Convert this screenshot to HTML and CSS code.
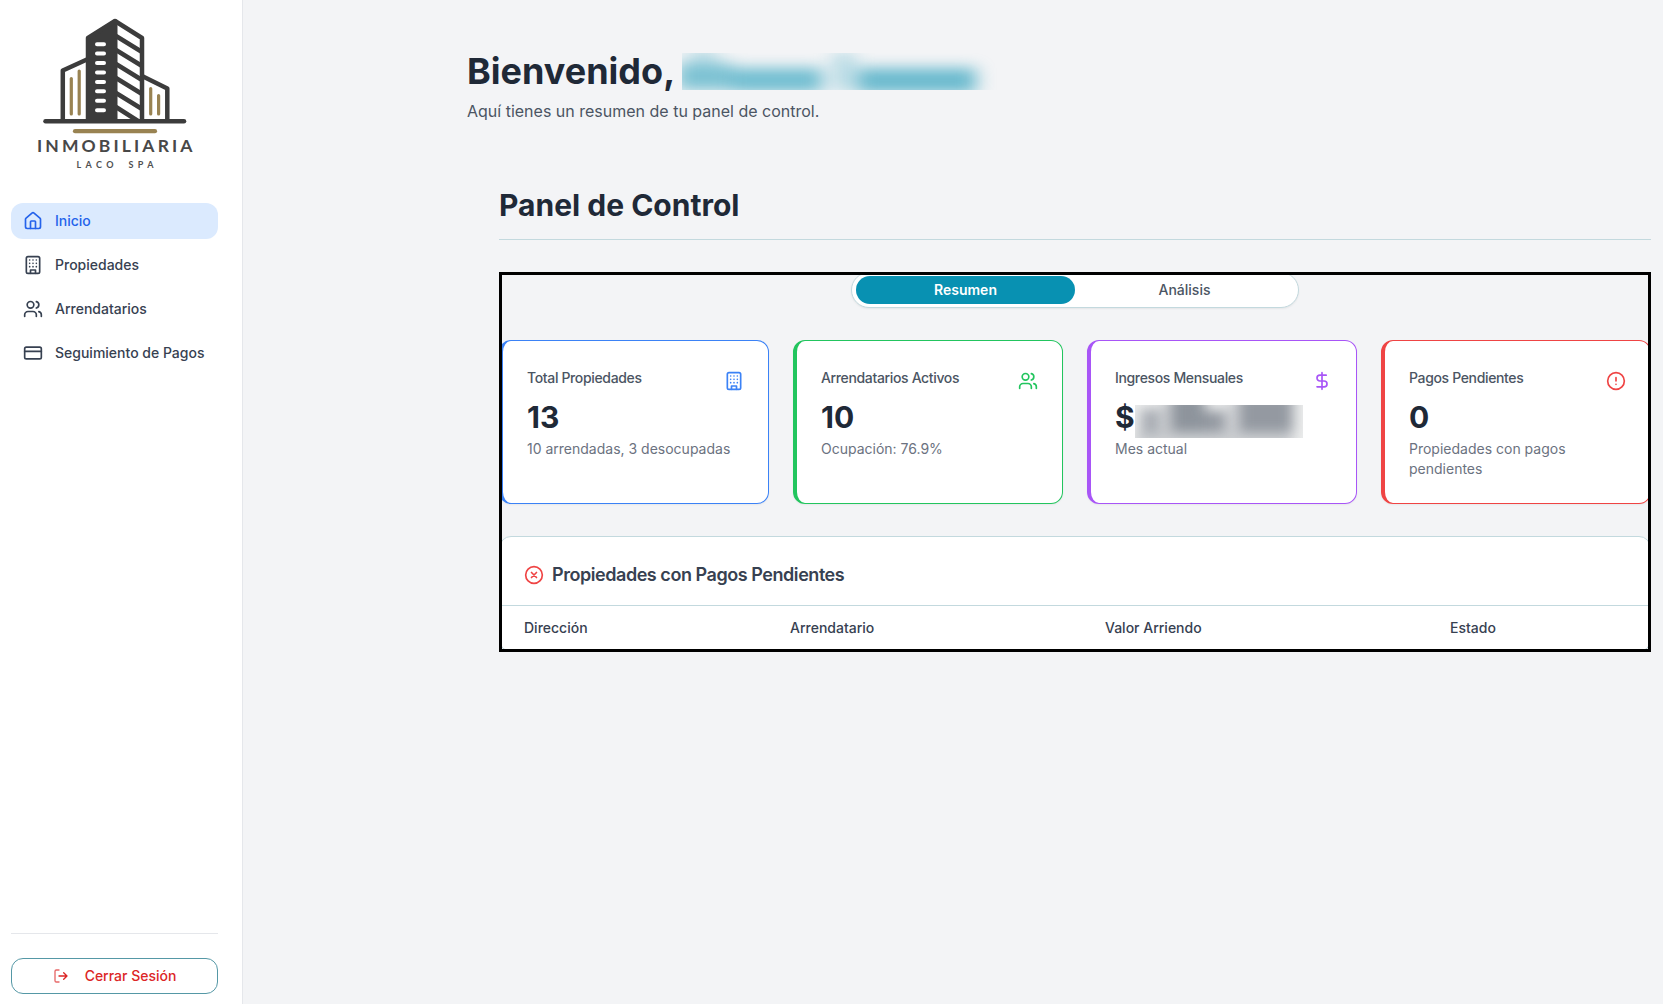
FILE: index.html
```html
<!DOCTYPE html>
<html lang="es">
<head>
<meta charset="utf-8">
<title>Inmobiliaria Laco SpA</title>
<link rel="stylesheet" href="styles.css">
</head>
<body>
<svg class="defs" width="0" height="0" aria-hidden="true">
  <symbol id="i-home" viewBox="0 0 24 24"><path d="M15 21v-8a1 1 0 0 0-1-1h-4a1 1 0 0 0-1 1v8"/><path d="M3 10a2 2 0 0 1 .709-1.528l7-5.999a2 2 0 0 1 2.582 0l7 5.999A2 2 0 0 1 21 10v9a2 2 0 0 1-2 2H5a2 2 0 0 1-2-2z"/></symbol>
  <symbol id="i-building" viewBox="0 0 24 24"><rect x="4" y="2" width="16" height="20" rx="2"/><path d="M9 22v-4h6v4M8 6h.01M16 6h.01M12 6h.01M12 10h.01M12 14h.01M16 10h.01M16 14h.01M8 10h.01M8 14h.01"/></symbol>
  <symbol id="i-users" viewBox="0 0 24 24"><path d="M16 21v-2a4 4 0 0 0-4-4H6a4 4 0 0 0-4 4v2"/><circle cx="9" cy="7" r="4"/><path d="M22 21v-2a4 4 0 0 0-3-3.87M16 3.13a4 4 0 0 1 0 7.75"/></symbol>
  <symbol id="i-card" viewBox="0 0 24 24"><rect x="2" y="5" width="20" height="14" rx="2"/><path d="M2 10h20"/></symbol>
  <symbol id="i-logout" viewBox="0 0 24 24"><path opacity=".7" d="M9 21H5a2 2 0 0 1-2-2V5a2 2 0 0 1 2-2h4"/><path d="m16 17 5-5-5-5M21 12H9"/></symbol>
  <symbol id="i-dollar" viewBox="0 0 24 24"><path d="M12 2v20M17 5H9.5a3.5 3.5 0 0 0 0 7h5a3.5 3.5 0 0 1 0 7H6"/></symbol>
  <symbol id="i-alert" viewBox="0 0 24 24"><circle cx="12" cy="12" r="10"/><path d="M12 8v4M12 16h.01"/></symbol>
  <symbol id="i-x" viewBox="0 0 24 24"><circle cx="12" cy="12" r="10"/><path d="m15 9-6 6M9 9l6 6"/></symbol>
</svg>
<div class="app">
  <aside class="sidebar">
    <svg class="logo" viewBox="35 10 165 165" role="img" aria-label="Inmobiliaria Laco SpA">
      <path d="M86 37.500 115 19l2.500 1V121H86z" fill="#3c3c3c"/>
      <g fill="none" stroke="#3c3c3c" stroke-width="4.500" stroke-linejoin="round">
        <path d="M88 121V38l27-17 27 17v83"/>
        <path d="M62.800 121V70.500L88 59M142 76l25.300 12.500V121"/>
        <path d="m116 36 26 16M116 50l26 16M116 64l26 16M116 78l26 16M116 93l26 16M116 107l22 14"/>
        <path d="M45.500 121.300h138.500" stroke-linecap="round"/>
      </g>
      <g fill="none" stroke="#fff" stroke-width="4" stroke-linecap="round">
        <path d="M97 44.200h7M97 53.600h7M97 63h7M97 72.500h7M97 82h7M97 91.300h7M97 100.800h7M97 110.300h7"/>
      </g>
      <g fill="none" stroke="#998352" stroke-linecap="round">
        <path d="M71.300 78.500v35.500M79.200 71v43M150.700 88.500V114M158.600 95.500V114" stroke-width="3.200"/>
        <path d="M75 131.200h80" stroke-width="4.200"/>
      </g>
      <text class="logo-name" x="37" y="152.300" textLength="155.500">INMOBILIARIA</text>
      <text class="logo-sub" x="76.500" y="168" textLength="37">LACO</text>
      <text class="logo-sub" x="128.500" y="168" textLength="25">SPA</text>
    </svg>
    <nav class="nav">
      <a class="nav-item active"><svg class="icon"><use href="#i-home"/></svg>Inicio</a>
      <a class="nav-item"><svg class="icon"><use href="#i-building"/></svg>Propiedades</a>
      <a class="nav-item"><svg class="icon"><use href="#i-users"/></svg>Arrendatarios</a>
      <a class="nav-item"><svg class="icon"><use href="#i-card"/></svg>Seguimiento de Pagos</a>
    </nav>
    <div class="sidebar-foot">
      <button class="logout"><svg class="icon"><use href="#i-logout"/></svg>Cerrar Sesión</button>
    </div>
  </aside>
  <main class="main">
    <header class="welcome">
      <h1>Bienvenido,
        <svg class="hidden-name" viewBox="0 0 330 37" aria-hidden="true">
          <defs><filter id="soft" filterUnits="userSpaceOnUse" x="-60" y="-60" width="450" height="160" color-interpolation-filters="sRGB"><feGaussianBlur stdDeviation="9 7"/></filter></defs>
          <g filter="url(#soft)" fill="#0891b2">
            <rect x="-4" y="10" width="54" height="27" opacity=".5"/>
            <rect x="8" y="-6" width="26" height="16" opacity=".2"/>
            <rect x="50" y="15" width="90" height="24" opacity=".55"/>
            <rect x="150" y="0" width="24" height="38" opacity=".24"/>
            <rect x="176" y="15" width="118" height="25" opacity=".58"/>
          </g>
        </svg>
      </h1>
      <p>Aquí tienes un resumen de tu panel de control.</p>
    </header>
    <section class="panel">
      <h2>Panel de Control</h2>
      <div class="framed">
        <div class="tabs">
          <button class="tab selected">Resumen</button>
          <button class="tab">Análisis</button>
        </div>
        <div class="cards">
          <article class="card blue">
            <div class="card-head"><h3>Total Propiedades</h3><svg class="icon"><use href="#i-building"/></svg></div>
            <div class="value">13</div>
            <p>10 arrendadas, 3 desocupadas</p>
          </article>
          <article class="card green">
            <div class="card-head"><h3>Arrendatarios Activos</h3><svg class="icon"><use href="#i-users"/></svg></div>
            <div class="value">10</div>
            <p>Ocupación: 76.9%</p>
          </article>
          <article class="card purple">
            <div class="card-head"><h3>Ingresos Mensuales</h3><svg class="icon"><use href="#i-dollar"/></svg></div>
            <div class="value">$<svg class="hidden-amount" viewBox="0 0 168 33" aria-hidden="true">
              <defs><filter id="soft2" filterUnits="userSpaceOnUse" x="-40" y="-40" width="250" height="120" color-interpolation-filters="sRGB"><feGaussianBlur stdDeviation="6.500 6"/></filter></defs>
              <rect width="168" height="33" fill="#eceded"/>
              <g filter="url(#soft2)" fill="#5d6572">
                <rect x="6" y="4" width="18" height="24" opacity=".48"/>
                <rect x="24" y="-4" width="12" height="32" opacity=".2"/>
                <rect x="36" y="-10" width="34" height="37" opacity=".66"/>
                <rect x="70" y="6" width="20" height="21" opacity=".62"/>
                <rect x="90" y="-4" width="14" height="32" opacity=".18"/>
                <rect x="104" y="-10" width="54" height="37" opacity=".62"/>
                <rect x="0" y="27" width="158" height="14" opacity=".24"/>
              </g>
            </svg></div>
            <p>Mes actual</p>
          </article>
          <article class="card red">
            <div class="card-head"><h3>Pagos Pendientes</h3><svg class="icon"><use href="#i-alert"/></svg></div>
            <div class="value">0</div>
            <p>Propiedades con pagos pendientes</p>
          </article>
        </div>
        <section class="pending">
          <h3><svg class="icon"><use href="#i-x"/></svg>Propiedades con Pagos Pendientes</h3>
          <div class="thead"><span>Dirección</span><span>Arrendatario</span><span>Valor Arriendo</span><span>Estado</span></div>
        </section>
      </div>
    </section>
  </main>
</div>
</body>
</html>
```
FILE: styles.css
```css
* { box-sizing: border-box; margin: 0; padding: 0; }
body {
  font-family: Inter, "Liberation Sans", sans-serif;
  font-size: 14px;
  line-height: 20px;
  color: #1f2937;
  background: #f3f4f6;
}
button { font: inherit; border: 0; background: none; }
.defs { display: block; }
.icon {
  width: 20px; height: 20px; flex: none;
  fill: none; stroke: currentColor; stroke-width: 2;
  stroke-linecap: round; stroke-linejoin: round;
}
.app { display: flex; height: 1004px; overflow: hidden; }

.sidebar {
  width: 243px; flex: none;
  display: flex; flex-direction: column;
  padding: 10px 24px 10px 11px;
  background: #fff;
  border-right: 1px solid #e5e7eb;
}
.logo { width: 165px; height: 165px; margin-left: 24px; }
.logo-name { font: 700 17.500px Lato, sans-serif; fill: #484848; }
.logo-sub { font: 700 9px Lato, sans-serif; fill: #505050; }
.nav { display: flex; flex-direction: column; gap: 8px; margin-top: 28px; }
.nav-item {
  display: flex; align-items: center; gap: 12px;
  height: 36px; padding: 0 12px;
  border-radius: 12px;
  font-weight: 500; color: #374151;
  white-space: nowrap;
}
.nav-item.active { background: #dbeafe; color: #2563eb; }
.sidebar-foot { margin-top: auto; border-top: 1px solid #e5e7eb; padding-top: 24px; }
.logout {
  display: flex; align-items: center; justify-content: center; gap: 16px;
  width: 100%; height: 36px;
  border: 1px solid #5598a6; border-radius: 12px;
  font-weight: 500; color: #dc2626;
}
.logout .icon { width: 16px; height: 16px; }

.main { flex: 1; padding: 51px 12px 0 224px; }
.welcome h1 {
  display: flex; align-items: flex-start; gap: 7px;
  font-size: 36px; line-height: 40px; font-weight: 700;
}
.hidden-name { width: 330px; height: 37px; margin-top: 2px; overflow: hidden; }
.welcome p { margin-top: 8px; font-size: 16px; line-height: 24px; color: #4b5563; }
.panel { margin: 64px 0 0 32px; }
.panel h2 {
  font-size: 30px; line-height: 36px; font-weight: 700;
  padding-bottom: 16px; margin-bottom: 32px;
  border-bottom: 1px solid #c3d9de;
}

.framed { position: relative; height: 380px; overflow: hidden; }
.framed::after { content: ""; position: absolute; inset: 0; border: 3px solid #000; }
.tabs {
  display: flex; align-items: center;
  width: 448px; height: 36px; margin: 0 auto 32px; padding: 0 4px;
  background: #fff;
  border: 1px solid #c3d9de; border-radius: 18px;
  box-shadow: 0 1px 2px rgba(0, 0, 0, .06);
}
.tab { flex: 1; height: 28px; border-radius: 14px; font-weight: 500; color: #4b5563; }
.tab.selected { background: #0891b2; color: #fff; font-weight: 600; }

.cards { display: grid; grid-template-columns: repeat(4, 1fr); gap: 24px; }
.card {
  height: 164px; padding: 24px;
  background: #fff;
  border: 1px solid var(--tone); border-left-width: 4px;
  border-radius: 12px;
  box-shadow: 0 1px 2px rgba(0, 0, 0, .05);
}
.blue { --tone: #3b82f6; }
.green { --tone: #22c55e; }
.purple { --tone: #a855f7; }
.red { --tone: #ef4444; }
.card-head { display: flex; justify-content: space-between; height: 34px; padding-top: 3px; }
.card-head h3 { font-size: 14px; font-weight: 500; letter-spacing: -.025em; color: #4b5563; }
.card-head .icon { margin-top: 3px; color: var(--tone); }
.value { display: flex; height: 36px; font-size: 30px; line-height: 36px; font-weight: 700; }
.hidden-amount { width: 168px; height: 33px; margin-top: 6px; overflow: hidden; }
.card p { margin-top: 4px; color: #6b7280; }

.pending {
  height: 116px; margin-top: 32px;
  background: #fff;
  border: 1px solid #c3d9de; border-radius: 12px;
}
.pending h3 {
  display: flex; align-items: center; gap: 8px;
  height: 69px; padding: 8px 24px 0;
  font-size: 18px; font-weight: 600; letter-spacing: -.025em; color: #374151;
  border-bottom: 1px solid #c3d9de;
}
.pending h3 .icon { color: #ef4444; }
.thead {
  display: grid; grid-template-columns: 266px 315px 345px 1fr;
  padding: 12px 24px 0;
  font-weight: 500; color: #374151;
}
```
